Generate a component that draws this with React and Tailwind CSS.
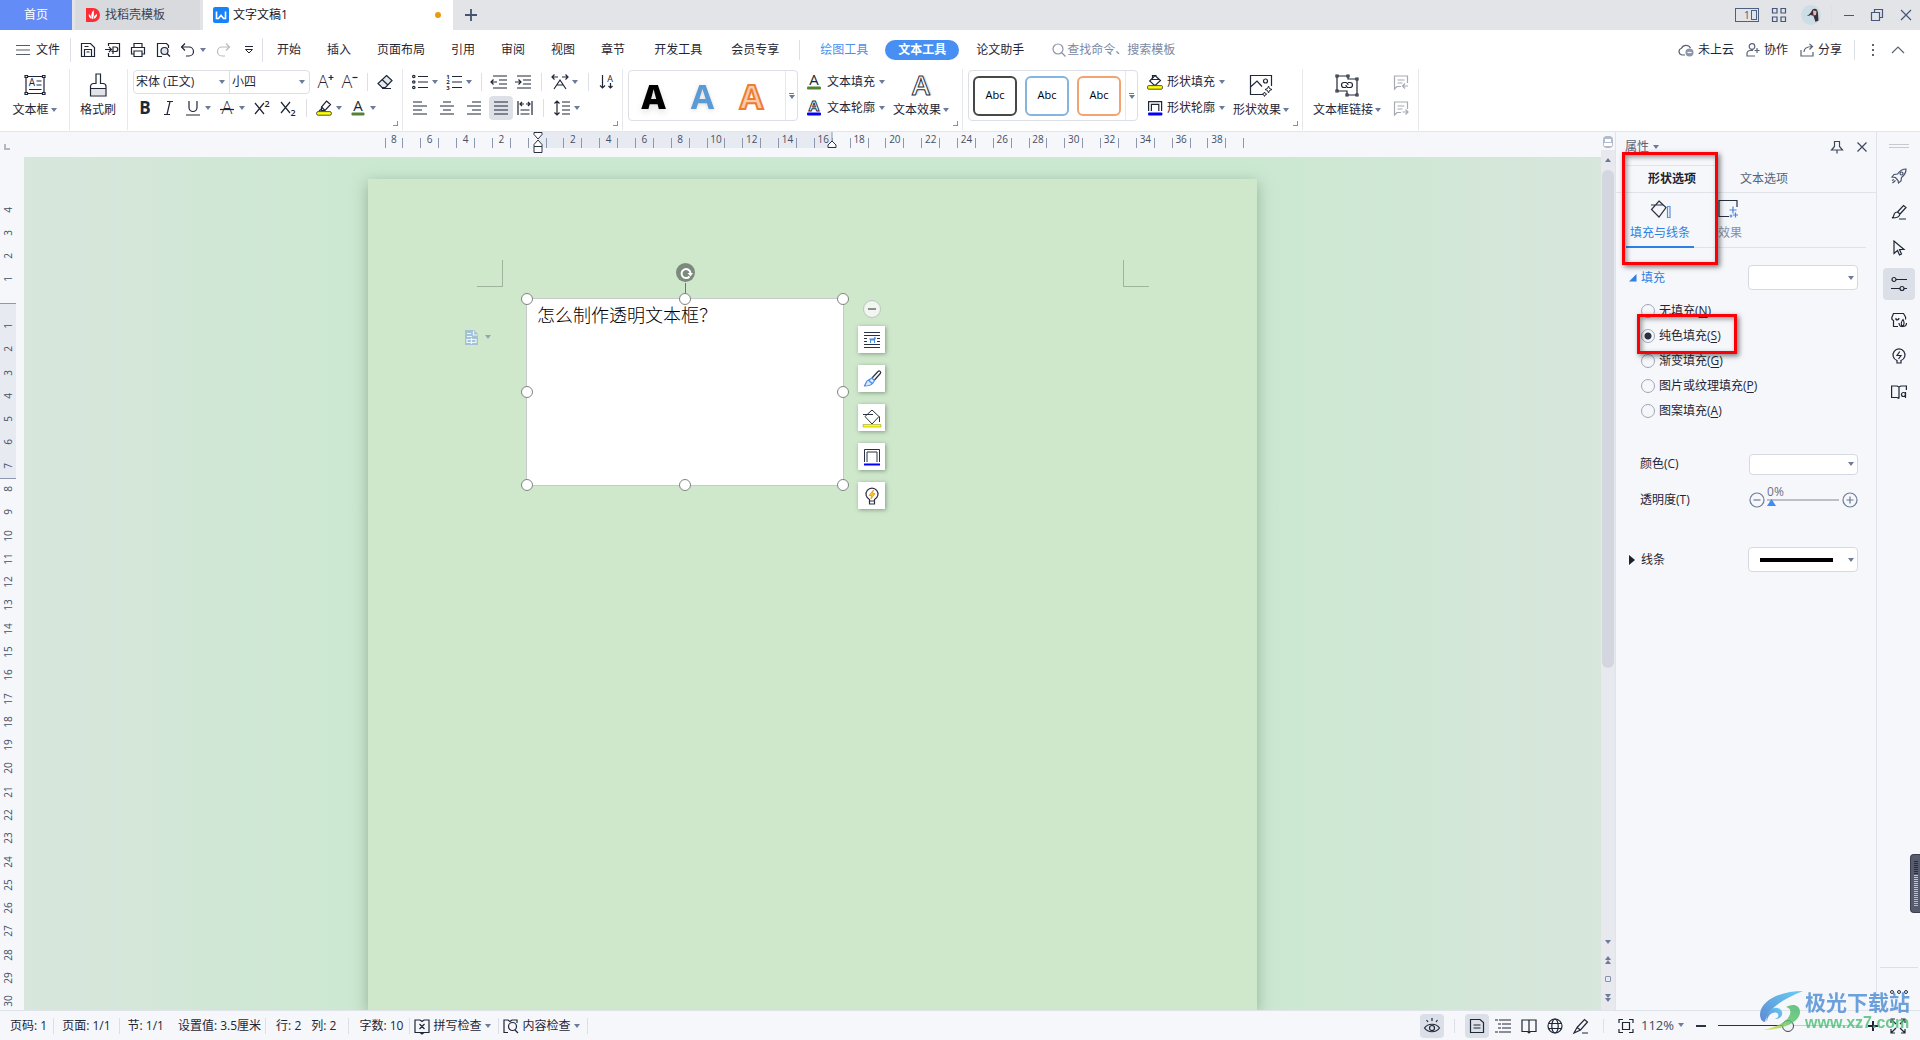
import { useState } from 'react';

const H_MARKS = Array.from({ length: 48 }, (_, i) => (i % 2 === 1 || i === 8 ? '' : String(Math.abs(i - 8))));

const V_MARKS = Array.from({ length: 35 }, (_, i) => (i === 4 ? '' : String(Math.abs(i - 4))));

const MENU = ['开始', '插入', '页面布局', '引用', '审阅', '视图', '章节'];
const FILLS = [
  ['无填充', 'N'],
  ['纯色填充', 'S'],
  ['渐变填充', 'G'],
  ['图片或纹理填充', 'P'],
  ['图案填充', 'A'],
];

function Svg({ size = 16, className = '', children }) {
  return (
    <svg
      width={size}
      height={size}
      viewBox={`0 0 ${size} ${size}`}
      fill="none"
      stroke="currentColor"
      strokeWidth={1.2}
      className={`shrink-0 overflow-visible ${className}`}
      aria-hidden="true"
    >
      {children}
    </svg>
  );
}

function Caret({ className = '' }) {
  return (
    <svg width="6" height="4" viewBox="0 0 6 4" className={`shrink-0 text-[#6d7b98] ${className}`} aria-hidden="true">
      <path d="M0 0h6L3 4z" fill="currentColor" />
    </svg>
  );
}

function Letter({ x = 8, y = 12, size = 15, children, ...rest }) {
  return (
    <text
      x={x}
      y={y}
      fontSize={size}
      textAnchor="middle"
      fill="currentColor"
      stroke="none"
      fontFamily="Open Sans, sans-serif"
      {...rest}
    >
      {children}
    </text>
  );
}

function Sep({ className = 'h-4' }) {
  return <span className={`w-px shrink-0 bg-[#dcdfe5] ${className}`} />;
}

function Tool({ label, className = 'w-6', children, caret }) {
  return (
    <button
      type="button"
      aria-label={label}
      className={`h-6 shrink-0 flex items-center justify-center gap-1 rounded-sm ${className}`}
    >
      {children}
      {caret && <Caret />}
    </button>
  );
}

function BigTool({ label, className = '', children, caret }) {
  return (
    <button type="button" className={`shrink-0 flex flex-col items-center gap-1 pt-1 ${className}`}>
      {children}
      <span className="flex items-center gap-0.5 leading-[18px]">
        {label}
        {caret && <Caret />}
      </span>
    </button>
  );
}

function LabelTool({ label, children }) {
  return (
    <button type="button" className="h-[26px] flex items-center gap-1 whitespace-nowrap">
      {children}
      {label}
      <Caret />
    </button>
  );
}

function Group({ className = '', launcher, children }) {
  return (
    <div className={`relative shrink-0 h-[61px] border-r border-[#e6e8ec] ${className}`}>
      {children}
      {launcher && (
        <span className="absolute right-1 bottom-1 w-[5px] h-[5px] border-r border-b border-[#8790a5]" />
      )}
    </div>
  );
}

function GalleryMore() {
  return (
    <button type="button" aria-label="更多样式" className="w-3 h-full flex flex-col items-center justify-center gap-px border-l border-[#e6e8ec]">
      <span className="w-[5px] h-px bg-[#6d7b98]" />
      <Caret />
    </button>
  );
}

function BucketIcon({ color }) {
  return (
    <Svg>
      <path d="M8 1.5l5.5 5-4.8 4.5H7L2.7 7z" />
      <path d="M4 5.5h9M5.5 4.5V1.5h4" />
      <rect x="0.6" y="11.6" width="14.8" height="3.6" rx="1" fill={color} strokeWidth="0.8" />
    </Svg>
  );
}

function OutlineIcon() {
  return (
    <Svg>
      <path d="M1.6 11V1.6h13V11M4.4 11V4.4h7.4V11" />
      <rect x="1" y="12.5" width="14.4" height="3" rx="1" fill="#0000ff" stroke="none" />
    </Svg>
  );
}

function TitleBar() {
  return (
    <header className="h-[30px] shrink-0 flex items-stretch bg-[#e2e4e8]">
      <button type="button" className="w-[72px] bg-[#648cf7] text-white">首页</button>
      <button type="button" className="ml-[3px] w-[125px] pl-[10px] flex items-center gap-1 bg-[#d9dadd] text-[#3c4254]">
        <Svg>
          <path d="M1 1h7a7 7 0 010 14H1z" fill="#fb2c36" stroke="none" />
          <path d="M7.5 12.5C5.5 9.5 6 6 8.5 3c.8 3.5.5 6.5-1 9.5zM6.5 12C4.5 11 3.5 9 3.8 7c1.7 1 2.7 2.7 2.7 5zM8.5 12c.3-2.5 1.5-4.2 3.5-5 .2 2.3-1 4.3-3.5 5z" fill="#fff" stroke="none" />
        </Svg>
        找稻壳模板
      </button>
      <button type="button" className="ml-[3px] w-[250px] pl-[10px] pr-3 flex items-center gap-1 bg-white text-[#14181f]">
        <Svg>
          <rect x="0" y="0" width="16" height="16" rx="2" fill="#1683fb" stroke="none" />
          <path d="M3.5 4.5v7h2L8 8.2l2.5 3.3h2v-7" stroke="#fff" strokeWidth="1.6" />
        </Svg>
        文字文稿1
        <span className="ml-auto w-[6px] h-[6px] rounded-full bg-[#e89c0c]" />
      </button>
      <button type="button" aria-label="新建标签" className="w-9 flex items-center justify-center text-[#45536f]">
        <Svg size={12}>
          <path d="M6 0v12M0 6h12" strokeWidth="1.8" />
        </Svg>
      </button>
      <div className="ml-auto pr-2 flex items-center text-[#45567a]">
        <button type="button" aria-label="窗口布局" className="relative w-6 h-[14px] border border-[#4d6080] text-[10px] leading-3 text-left pl-2">
          1
          <span className="absolute right-px top-px w-[6px] h-[10px] border border-[#4d6080]" />
        </button>
        <button type="button" aria-label="应用" className="ml-3">
          <Svg>
            <path d="M1.5 1.5h4.500v4.500H1.500zM10 1.500h4.500v4.500H10zM1.500 10h4.500v4.500H1.500zM10 10h4.500v4.500H10z" />
          </Svg>
        </button>
        <button type="button" aria-label="账号" className="ml-[14px]">
          <Svg size={20}>
            <circle cx="10" cy="10" r="10" fill="#cddde5" stroke="none" />
            <path d="M11.500 4.500c3-2 5.500 0 5.500 4l.5 7-3 1.500-2-6-2.500-1c-2.500 1-3.500 1-4 .5 2-.5 3.500-2 5.500-6z" fill="#3a2f3c" stroke="none" />
            <path d="M12 5.500l3.500.500-.500 4-2.500.5z" fill="#e8b9a8" stroke="none" />
          </Svg>
        </button>
        <Sep className="ml-[10px] h-5 bg-[#c4c7ce]" />
        <button type="button" aria-label="最小化" className="ml-3 w-[10px] h-px bg-[#45567a]" />
        <button type="button" aria-label="还原" className="ml-4">
          <Svg size={14}>
            <path d="M1.500 4.500h8v8h-8zM4.500 4V1.500h8v8H10" />
          </Svg>
        </button>
        <button type="button" aria-label="关闭" className="ml-4">
          <Svg size={12}>
            <path d="M1 1l10 10M11 1L1 11" />
          </Svg>
        </button>
      </div>
    </header>
  );
}

function MenuBar() {
  return (
    <div className="h-[39px] shrink-0 flex items-center whitespace-nowrap">
      <button type="button" className="pl-4 flex items-center gap-[6px]">
        <Svg size={14}>
          <path d="M0 2.500h14M0 7h14M0 11.500h14" stroke="#555c6b" />
        </Svg>
        文件
      </button>
      <Sep className="ml-[10px] h-6" />
      <div className="pl-[9px] flex items-center gap-[9px]">
        <button type="button" aria-label="保存">
          <Svg>
            <path d="M1.500 14.500v-13h9l4 4v9zM4.500 14.500v-7h7v7M6.500 10h3M4.500 4.500h4" />
          </Svg>
        </button>
        <button type="button" aria-label="输出">
          <Svg>
            <path d="M3.500 4V1.500h11v13h-11V11M0 7.500h6M4 5l2.500 2.500L4 10M8 12V5h2.500a2 2 0 010 4.500H6.500" />
          </Svg>
        </button>
        <button type="button" aria-label="打印">
          <Svg>
            <path d="M4 5V1.500h8V5M3.500 12h-2V5.500h13V12h-2M4 9h8v5.500H4z" />
          </Svg>
        </button>
        <button type="button" aria-label="打印预览">
          <Svg>
            <path d="M7 14.500H2.500v-13h9l2 2V6" />
            <circle cx="9.500" cy="9" r="3.500" fill="#dfe3ea" />
            <path d="M12 11.500l3 3" />
          </Svg>
        </button>
        <button type="button" aria-label="撤销" className="flex items-center gap-1">
          <Svg>
            <path d="M5 1.500L1.500 5 5 8.500M1.500 5H9a4.500 4.500 0 010 9H6" />
          </Svg>
          <Caret />
        </button>
        <button type="button" aria-label="恢复" className="text-[#b6bac2]">
          <Svg>
            <path d="M11 1.500L14.500 5 11 8.500M14.500 5H7a4.500 4.500 0 000 9h3" />
          </Svg>
        </button>
        <button type="button" aria-label="自定义快速访问" className="ml-1">
          <Svg size={10}>
            <path d="M1 1.500h8M1.500 4.500h7L5 8z" strokeWidth="1" />
          </Svg>
        </button>
      </div>
      <Sep className="ml-2 h-6" />
      <nav className="pl-[14px] flex items-center gap-[26px]">
        {MENU.map((m) => (
          <button key={m} type="button">{m}</button>
        ))}
      </nav>
      <nav className="pl-[29px] flex items-center gap-[29px]">
        <button type="button">开发工具</button>
        <button type="button">会员专享</button>
      </nav>
      <Sep className="ml-5 h-5" />
      <nav className="pl-5 flex items-center gap-[17px]">
        <button type="button" className="text-[#4a8ff2]">绘图工具</button>
        <button type="button" className="w-[74px] h-5 rounded-full bg-[#478ff3] text-white font-bold">文本工具</button>
        <button type="button">论文助手</button>
      </nav>
      <label className="pl-7 flex items-center gap-px text-[#8b95aa]">
        <Svg size={14}>
          <circle cx="6" cy="6" r="5" />
          <path d="M9.500 9.500l4 4" />
        </Svg>
        <input aria-label="查找" placeholder="查找命令、搜索模板" className="w-[120px] outline-none placeholder:text-[#7c88a1]" />
      </label>
      <div className="ml-auto pr-[15px] flex items-center gap-3">
        <button type="button" className="flex items-center gap-1">
          <Svg className="text-[#5b6375]">
            <path d="M7 13H4A3.500 3.500 0 013.500 6.200 5 5 0 0112.500 6" />
            <circle cx="11.500" cy="10.500" r="4" fill="#8c96ab" stroke="none" />
            <path d="M9.500 10.500h4" stroke="#fff" />
          </Svg>
          未上云
        </button>
        <button type="button" className="flex items-center gap-1">
          <Svg size={14} className="text-[#5b6375]">
            <circle cx="6" cy="3.500" r="2.800" />
            <path d="M9 13H1v-2.500a3 3 0 013-3h3M11 5v5M8.500 7.500h5" />
          </Svg>
          协作
        </button>
        <button type="button" className="flex items-center gap-1">
          <Svg size={14} className="text-[#5b6375]">
            <path d="M1 7v6h12V9M4 9c0-4 3-5.500 8.500-5.500M9.500 1l3 2.500-3 3" />
          </Svg>
          分享
        </button>
        <Sep className="h-5" />
        <button type="button" aria-label="更多" className="w-3 flex flex-col items-center gap-[3px]">
          <span className="w-[2px] h-[2px] bg-[#5b6375]" />
          <span className="w-[2px] h-[2px] bg-[#5b6375]" />
          <span className="w-[2px] h-[2px] bg-[#5b6375]" />
        </button>
        <button type="button" aria-label="收起功能区">
          <Svg size={14} className="text-[#5b6375]">
            <path d="M1 10l6-6 6 6" />
          </Svg>
        </button>
      </div>
    </div>
  );
}

function FontGroup() {
  return (
    <Group launcher className="w-[275px] pl-[5px]">
      <div className="h-[26px] flex items-center">
        <div className="flex h-6 rounded-sm border border-[#dcdfe5]">
          <div className="relative flex items-center border-r border-[#dcdfe5]">
            <select aria-label="字体" defaultValue="宋体 (正文)" className="w-[95px] pl-[2px] appearance-none outline-none">
              <option>宋体 (正文)</option>
            </select>
            <Caret className="absolute right-1" />
          </div>
          <div className="relative flex items-center">
            <select aria-label="字号" defaultValue="小四" className="w-[79px] pl-[2px] appearance-none outline-none">
              <option>小四</option>
            </select>
            <Caret className="absolute right-1" />
          </div>
        </div>
        <Tool label="增大字号" className="ml-1 w-6">
          <Svg>
            <Letter x={5} y={14} size={18} fontWeight="300">A</Letter>
            <path d="M10.500 3.500h5M13 1v5" />
          </Svg>
        </Tool>
        <Tool label="减小字号">
          <Svg>
            <Letter x={5} y={14} size={18} fontWeight="300">A</Letter>
            <path d="M10.500 3.500h5" />
          </Svg>
        </Tool>
        <Sep className="mx-[5px] h-[18px]" />
        <Tool label="清除格式">
          <Svg>
            <path d="M9.500 1.500l5.500 5-6.500 7H5l-4-4z" fill="#e6e9ee" />
            <path d="M5 5.500l6 5.500M5 14.500h9" />
          </Svg>
        </Tool>
      </div>
      <div className="h-[26px] flex items-center">
        <Tool label="加粗">
          <span className="text-[17px] font-bold">B</span>
        </Tool>
        <Tool label="倾斜">
          <Svg>
            <path d="M6 1.500h6M3 14.500h6M9 1.500l-3 13" />
          </Svg>
        </Tool>
        <Tool label="下划线" className="w-[34px]" caret>
          <Svg>
            <path d="M4 1v6.500a4 4 0 008 0V1M1 15h14" />
          </Svg>
        </Tool>
        <Tool label="删除线" className="w-[34px]" caret>
          <Svg>
            <Letter y={14} size={18} fontWeight="300">A</Letter>
            <path d="M1 9.500h14" />
          </Svg>
        </Tool>
        <Tool label="上标" className="w-[26px]">
          <Svg>
            <path d="M1 3l9 11M10 3L1 14" />
            <Letter x={13} y={7} size={9} fontWeight="600">2</Letter>
          </Svg>
        </Tool>
        <Tool label="下标" className="w-[26px]">
          <Svg>
            <path d="M1 2l9 11M10 2L1 13" />
            <Letter x={13} y={16} size={9} fontWeight="600">2</Letter>
          </Svg>
        </Tool>
        <Sep className="mx-[5px] h-[18px]" />
        <Tool label="突出显示" className="w-[34px]" caret>
          <Svg>
            <path d="M10.500 1l4 3.500-5.500 6H5.500V7zM5.500 7L9 10.500M3 11l2.500-2" />
            <rect x="0.600" y="11.600" width="14.800" height="3.600" rx="1.500" fill="#ffff00" strokeWidth="0.800" />
          </Svg>
        </Tool>
        <Tool label="字体颜色" className="w-[34px]" caret>
          <Svg>
            <Letter y={11} size={15}>A</Letter>
            <rect x="1.500" y="12.500" width="13" height="3" rx="1" fill="#548235" stroke="none" />
          </Svg>
        </Tool>
      </div>
    </Group>
  );
}

function ParagraphGroup() {
  return (
    <Group launcher className="w-[220px] pl-[5px]">
      <div className="h-[26px] flex items-center">
        <Tool label="项目符号" className="w-[34px]" caret>
          <Svg>
            <path d="M6 2.500h10M6 8h10M6 13.500h10" />
            <circle cx="1.800" cy="2.500" r="1.200" />
            <circle cx="1.800" cy="8" r="1.200" />
            <circle cx="1.800" cy="13.500" r="1.200" />
          </Svg>
        </Tool>
        <Tool label="编号" className="w-[34px]" caret>
          <Svg>
            <path d="M6 2.500h10M6 8h10M6 13.500h10" />
            <Letter x={2} y={5} size={6} fontWeight="700">1</Letter>
            <Letter x={2} y={10} size={6} fontWeight="700">2</Letter>
            <Letter x={2} y={16} size={6} fontWeight="700">3</Letter>
          </Svg>
        </Tool>
        <Sep className="mx-[5px] h-[18px]" />
        <Tool label="减少缩进">
          <Svg>
            <path d="M2 2h14M8 6h8M8 10h8M2 14h14M0 8h6M2.500 5.500L0 8l2.500 2.500" />
          </Svg>
        </Tool>
        <Tool label="增加缩进">
          <Svg>
            <path d="M2 2h14M8 6h8M8 10h8M2 14h14M0 8h6M3.500 5.500L6 8l-2.500 2.500" />
          </Svg>
        </Tool>
        <Sep className="mx-[6px] h-[18px]" />
        <Tool label="字符缩放" className="w-[34px]" caret>
          <Svg>
            <path d="M0 3h6M10 3h6M2.500.5L0 3l2.500 2.500M13.500.5L16 3l-2.500 2.500M2 15l6-9 6 9M5 11h6" />
          </Svg>
        </Tool>
        <Sep className="mx-[6px] h-[18px]" />
        <Tool label="排序">
          <Svg>
            <path d="M3.500 1v13M1 11.500L3.500 14 6 11.500M11.500 9v5M9.500 12l2 2 2-2" />
            <Letter x={11} y={8} size={9}>A</Letter>
          </Svg>
        </Tool>
      </div>
      <div className="h-[26px] flex items-center">
        <div className="flex gap-[3px]">
          <Tool label="左对齐">
            <Svg>
              <path d="M1 2h9M1 6h14M1 10h9M1 14h14" />
            </Svg>
          </Tool>
          <Tool label="居中">
            <Svg>
              <path d="M4 2h8M1 6h14M4 10h8M1 14h14" />
            </Svg>
          </Tool>
          <Tool label="右对齐">
            <Svg>
              <path d="M6 2h9M1 6h14M6 10h9M1 14h14" />
            </Svg>
          </Tool>
          <Tool label="两端对齐" className="w-6 bg-[#dde1e7]">
            <Svg>
              <path d="M1 2h14M1 6h14M1 10h14M1 14h14" />
            </Svg>
          </Tool>
        </div>
        <Tool label="分散对齐">
          <Svg>
            <path d="M1 1v14M15 1v14M3.500 10h9M3.500 14h9M3 4h4M9 4h4M5 2L3 4l2 2M11 2l2 2-2 2" />
          </Svg>
        </Tool>
        <Sep className="mx-[6px] h-[18px]" />
        <Tool label="行距" className="w-[34px]" caret>
          <Svg>
            <path d="M3 1v14M.5 3.500L3 1l2.500 2.500M.5 12.500L3 15l2.500-2.500M8 2h8M8 6h8M8 10h8M8 14h8" />
          </Svg>
        </Tool>
      </div>
    </Group>
  );
}

function Ribbon() {
  return (
    <div className="h-[62px] shrink-0 flex items-start whitespace-nowrap">
      <Group className="w-[70px]">
        <BigTool label="文本框" caret className="w-full">
          <Svg size={24}>
            <path d="M3 3.500h18v17H3z" />
            <path d="M13.500 8h5M13.500 12h5M6 16.500h12.500" />
            <Letter x={9} y={13} size={10}>A</Letter>
            <path d="M2 2.500h2.500v2H2zM19.500 2.500H22v2h-2.500zM2 19.500h2.500v2H2zM19.500 19.500H22v2h-2.500z" fill="#fff" />
          </Svg>
        </BigTool>
      </Group>
      <Group className="w-[58px]">
        <BigTool label="格式刷" className="w-[56px]">
          <Svg size={24}>
            <path d="M4.500 15.500h15v7h-15z" fill="#e2e4e8" stroke="none" />
            <path d="M10 1h4.500v9.500H17a3 3 0 013 3v9.500H4.500v-9.500a3 3 0 013-3H10zM4.500 15.500H20" />
          </Svg>
        </BigTool>
      </Group>
      <FontGroup />
      <ParagraphGroup />
      <Group launcher className="w-[340px] pl-[5px] flex">
        <div className="mt-px w-[170px] h-[51px] flex rounded-sm border border-[#dcdfe5]">
          <div className="flex-1 flex items-center text-[34px] font-bold">
            <button type="button" className="w-[49px] leading-none text-black font-extrabold drop-shadow-md">A</button>
            <button type="button" className="w-[49px] leading-none text-[#5b9bd5] drop-shadow-sm">A</button>
            <button type="button" className="w-[49px] leading-none text-[#f8cbad] [-webkit-text-stroke:2px_#ed7d31]">A</button>
          </div>
          <GalleryMore />
        </div>
        <div className="pl-[9px] flex flex-col">
          <LabelTool label="文本填充">
            <Svg>
              <Letter x={7} y={11} size={15}>A</Letter>
              <rect x="0" y="12.500" width="14" height="3" rx="1" fill="#548235" stroke="none" />
            </Svg>
          </LabelTool>
          <LabelTool label="文本轮廓">
            <Svg>
              <Letter x={7} y={11} size={15} fontWeight="700" fill="#fff" stroke="#2a3142" strokeWidth="1">A</Letter>
              <rect x="0" y="12.500" width="14" height="3" rx="1" fill="#0000ff" stroke="none" />
            </Svg>
          </LabelTool>
        </div>
        <BigTool label="文本效果" caret className="pl-2">
          <Svg size={24}>
            <Letter x={14} y={22} size={27} fontWeight="600" fill="#e2e4e8">A</Letter>
            <Letter x={12} y={22} size={27} fontWeight="600" fill="#fff" stroke="#2a3142" strokeWidth="1">A</Letter>
          </Svg>
        </BigTool>
      </Group>
      <Group launcher className="w-[340px] pl-[5px] flex">
        <div className="mt-px w-[170px] h-[51px] flex rounded-sm border border-[#dcdfe5]">
          <div className="flex-1 flex items-center justify-center gap-2 text-[11px] text-black">
            <button type="button" className="w-11 h-10 rounded-md border-2 border-[#45474b]">Abc</button>
            <button type="button" className="w-11 h-10 rounded-md border-2 border-[#84b4e0]">Abc</button>
            <button type="button" className="w-11 h-10 rounded-md border-2 border-[#f2a36f]">Abc</button>
          </div>
          <GalleryMore />
        </div>
        <div className="pl-[9px] flex flex-col">
          <LabelTool label="形状填充">
            <BucketIcon color="#ffff00" />
          </LabelTool>
          <LabelTool label="形状轮廓">
            <OutlineIcon />
          </LabelTool>
        </div>
        <BigTool label="形状效果" caret className="pl-2">
          <Svg size={24}>
            <path d="M14 21.500H1.500v-19h21V13M1.500 14L8 8l5 5.500" />
            <circle cx="16.500" cy="8" r="2" />
            <path d="M19.500 13l1 2.500 2.500 1-2.500 1-1 2.500-1-2.500-2.500-1 2.500-1zM15.500 19l.7 1.500 1.500.7-1.500.7-.7 1.500-.7-1.500-1.500-.7 1.500-.7z" strokeWidth="1" />
          </Svg>
        </BigTool>
      </Group>
      <Group className="w-[116px] flex">
        <BigTool label="文本框链接" caret className="w-[88px]">
          <Svg size={24}>
            <path d="M2 3h11v3h9v16H12v-4H2z" />
            <path d="M11 14.500H9a2.500 2.500 0 010-5h1.500a2.500 2.500 0 012.500 2.500M13 9.500h2a2.500 2.500 0 010 5h-1.500A2.500 2.500 0 0111 12" />
            <path d="M1 2h2v2H1zM12 2h2v2h-2zM21 5h2v2h-2zM1 17h2v2H1zM21 21h2v2h-2zM11 21h2v2h-2z" fill="#fff" />
          </Svg>
        </BigTool>
        <div className="-ml-[2px] flex flex-col text-[#a5a9b2]">
          <Tool label="上一个文本框" className="w-6 my-px">
            <Svg>
              <path d="M8 12.500H4L1.500 15V2h13v7M4.500 6h7M4.500 9h5M15 12H9.500M12 9.500L9.500 12l2.500 2.500" />
            </Svg>
          </Tool>
          <Tool label="下一个文本框" className="w-6 my-px">
            <Svg>
              <path d="M8 12.500H4L1.500 15V2h13v7M4.500 6h7M4.500 9h5M9.500 12H15M12.500 9.500L15 12l-2.500 2.500" />
            </Svg>
          </Tool>
        </div>
      </Group>
    </div>
  );
}

function HorizontalRuler() {
  return (
    <div className="h-[25px] shrink-0 flex bg-[#f5f7fa]">
      <div className="w-6 shrink-0 pl-1 pt-3">
        <span className="block w-[6px] h-[6px] border-l-2 border-b-2 border-[#b4b8c2]" />
      </div>
      <div className="flex-1 pl-1">
        <div className="relative mx-auto w-[860px] h-4 flex text-[10px] text-[#454f66]">
          <span className="absolute left-[153px] top-0 w-[294px] h-4 bg-[#e7eaf1]" />
          {H_MARKS.map((m, i) => (
            <span key={i} className="relative flex-1 flex">
              <span className="w-px h-[10px] self-end bg-[#8c98af]" />
              <span className="flex-1 w-0 flex justify-center leading-[14px]">{m}</span>
            </span>
          ))}
          <span className="w-px h-[10px] self-end bg-[#8c98af]" />
          <svg width="10" height="22" viewBox="0 0 10 22" className="absolute left-[148px] top-0" fill="#fff" stroke="#2a3142" aria-hidden="true">
            <path d="M1 .5h8v2L5 7 1 2.500zM5 8l4 4.500v2H1v-2zM1 14.500h8v6H1z" />
          </svg>
          <svg width="10" height="16" viewBox="0 0 10 16" className="absolute left-[442px] top-0" fill="#fff" stroke="#2a3142" aria-hidden="true">
            <path d="M5 0v9" stroke="#8c98af" />
            <path d="M5 9l4 4v2.500H1V13z" />
          </svg>
        </div>
      </div>
    </div>
  );
}

function VerticalRuler() {
  return (
    <div className="relative w-6 shrink-0 pt-[41px] overflow-hidden bg-[#f5f7fa]">
      <span className="absolute left-0 top-[146px] w-4 h-[176px] border-y border-[#8c98af] bg-[#e7eaf1]" />
      <div className="relative w-4 h-[815px] flex flex-col text-[10px] text-[#454f66]">
        {V_MARKS.map((m, i) => (
          <span key={i} className="flex-1 h-0 flex items-center justify-center">
            <span className="-rotate-90 leading-4">{m}</span>
          </span>
        ))}
      </div>
    </div>
  );
}

function Handle({ className }) {
  return <span className={`absolute w-3 h-3 -m-[6px] rounded-full border border-[#7e857f] bg-white ${className}`} />;
}

function TextBox() {
  return (
    <div className="absolute left-[158px] top-[119px] w-[318px] h-[188px] border border-[#c6cacb] bg-white">
      <p className="pl-[10px] pt-1 text-[18px] leading-6 font-light text-black">怎么制作透明文本框？</p>
      <span className="absolute left-1/2 -top-4 w-px h-4 bg-[#6d746e]" />
      <span className="absolute left-1/2 -top-9 -ml-[9px] w-[19px] h-[19px] rounded-full bg-[#7b8a7a] text-white flex items-center justify-center">
        <Svg size={14}>
          <path d="M10.500 10.500A4.500 4.500 0 1111.500 7" strokeWidth="2" />
          <path d="M8.500 7H14l-2.500 3.500z" fill="currentColor" stroke="none" />
        </Svg>
      </span>
      <Handle className="left-0 top-0" />
      <Handle className="left-1/2 top-0" />
      <Handle className="left-full top-0" />
      <Handle className="left-0 top-1/2" />
      <Handle className="left-full top-1/2" />
      <Handle className="left-0 top-full" />
      <Handle className="left-1/2 top-full" />
      <Handle className="left-full top-full" />
    </div>
  );
}

function QuickButton({ label, children }) {
  return (
    <button type="button" aria-label={label} className="w-[27px] h-[27px] flex items-center justify-center bg-white shadow-[1px_1px_4px_rgba(60,80,60,0.5)]">
      {children}
    </button>
  );
}

function QuickTools() {
  return (
    <div className="absolute left-[490px] top-[121px] flex flex-col items-center gap-3 text-[#2a3142]">
      <button type="button" aria-label="收起" className="-mb-1 w-[18px] h-[18px] flex items-center justify-center rounded-full border border-[#bcc6bb] bg-[#f1f6f0]">
        <span className="w-2 h-[2px] bg-[#8a938a]" />
      </button>
      <QuickButton label="布局选项">
        <Svg size={18}>
          <path d="M1 1.500h16M1 4.500h16M1 7.500h3M1 10.500h3M14 7.500h3M14 10.500h3M1 13.500h16M1 16.500h16" />
          <path d="M6 7.500h4.500L12 5.500l1 2-1 1V12h-1V9.500H8V12H7V9z" fill="#4a8ae8" stroke="none" />
        </Svg>
      </QuickButton>
      <QuickButton label="样式">
        <Svg size={18}>
          <path d="M9 8l6-6.500a1.500 1.500 0 012.300 2L11.500 10" />
          <path d="M1 16c2-1 1.500-5 4.500-6 1-.5 2.500-1.500 3.500-2l2.500 2.500c-.5 1-1 2-2 3-2 2.500-5.500 2.500-8.500 2.500zM5.500 10l3.500 3.500" stroke="#4a8ae8" fill="#dce9fb" />
        </Svg>
      </QuickButton>
      <QuickButton label="填充">
        <Svg size={18}>
          <path d="M9 1l7 6.500L9 15 2 7.500zM0 5.500h10M16.500 7.500V13" strokeWidth="1" />
          <path d="M0 15.500h18V18H0z" fill="#ffff00" stroke="#8a8a3a" strokeWidth="0.500" />
        </Svg>
      </QuickButton>
      <QuickButton label="轮廓">
        <Svg size={18}>
          <path d="M1.500 14V1.500h15V14M4 14V4h10v10" strokeWidth="1" />
          <path d="M1 16.500h16" stroke="#0000ff" strokeWidth="2" />
        </Svg>
      </QuickButton>
      <QuickButton label="更多建议">
        <Svg size={18}>
          <path d="M6.500 14v-1.500a6 6 0 115 0V14zM6.500 14h5v3h-5z" />
          <path d="M10.500 3L6 8.500h2.500L8 12l4-5.500H9.500z" fill="#fbc531" stroke="#e89c0c" strokeWidth="0.800" />
        </Svg>
      </QuickButton>
    </div>
  );
}

function Canvas() {
  return (
    <main className="flex-1 min-w-0 flex justify-center overflow-hidden pt-[22px] bg-[linear-gradient(to_right,#d8e6dc,#cbe8d1_22%,#cbe8d1_78%,#d8e6dc)]">
      <div className="relative w-[889px] shrink-0 bg-[#cfe8cc] shadow-[0_4px_14px_rgba(90,120,95,0.5)]">
        <span className="absolute left-[109px] top-[81px] w-[26px] h-[27px] border-r border-b border-[#9fb39d]" />
        <span className="absolute right-[108px] top-[81px] w-[26px] h-[27px] border-l border-b border-[#9fb39d]" />
        <button type="button" aria-label="段落布局" className="absolute left-[97px] top-[150px] flex items-center gap-1">
          <Svg className="text-[#eef6fb]">
            <path d="M0 1h9l4 4v11H0z" fill="#a3c2d6" stroke="none" />
            <path d="M2 4.500h4M2 7.500h5M2 10.500h9v3H2zM8.500 2v4h4M6.500 9v6" />
          </Svg>
          <Caret className="opacity-60" />
        </button>
        <TextBox />
        <QuickTools />
      </div>
    </main>
  );
}

function ScrollBar() {
  return (
    <div className="w-[14px] shrink-0 flex flex-col items-center bg-[#f5f7fa] text-[#8792ae]">
      <span className="mt-1 mb-[2px] w-[10px] h-3 rounded-sm bg-[#b3bacb] flex flex-col items-center justify-center gap-px">
        <span className="w-[6px] h-[3px] bg-white" />
        <span className="w-[8px] h-[3px] bg-white" />
      </span>
      <div className="flex-1 w-full flex flex-col items-center bg-[#e8e9ef]">
        <Caret className="my-2 rotate-180" />
        <span className="w-3 h-[498px] rounded-full bg-[#d3d6df]" />
        <div className="mt-auto pb-2 flex flex-col items-center gap-3">
          <Caret />
          <span className="flex flex-col">
            <Caret className="rotate-180" />
            <Caret className="rotate-180" />
          </span>
          <span className="w-[6px] h-[6px] rounded-[1px] border border-[#8792ae]" />
          <span className="flex flex-col">
            <Caret />
            <Caret />
          </span>
        </div>
      </div>
    </div>
  );
}

function PropertyPanel() {
  const [fill, setFill] = useState('S');
  const [opacity, setOpacity] = useState(0);

  return (
    <aside className="relative w-[262px] shrink-0 border-x border-[#e1e3ea] bg-[#f5f7fa]">
      <div className="h-[33px] pl-[9px] pr-2 pb-1 flex items-center text-[#5a6275]">
        属性
        <Caret className="ml-1" />
        <button type="button" aria-label="固定" className="ml-auto text-[#3c465c]">
          <Svg size={14}>
            <path d="M4.500 1.500h5v5l3 3.500h-11l3-3.500zM7 10v3.500" />
          </Svg>
        </button>
        <button type="button" aria-label="关闭面板" className="ml-3 text-[#3c465c]">
          <Svg size={12}>
            <path d="M1.500 1.500l9 9M10.500 1.500l-9 9" />
          </Svg>
        </button>
      </div>
      <div className="h-7 flex items-stretch border-b border-[#e1e3ea]">
        <button type="button" className="w-[92px] ml-[10px] border-t border-[#e1e3ea] font-bold text-[#1c2230]">形状选项</button>
        <button type="button" className="w-[92px] text-[#5a6275]">文本选项</button>
      </div>
      <div className="ml-[10px] mr-[10px] h-[55px] flex items-stretch border-b border-[#e1e3ea]">
        <button type="button" className="-mb-px w-[68px] pt-[6px] flex flex-col items-center gap-1 border-b-2 border-[#2f7fe6] text-[#2f7fe6]">
          <Svg size={20} className="text-[#2a3142]">
            <path d="M9 2l7 6.500L9 18 1.500 10.500zM1 6h12" />
            <path d="M17.500 7.500H20v11h-2.500z" stroke="#5b8fe0" />
          </Svg>
          <span className="leading-5">填充与线条</span>
        </button>
        <button type="button" className="w-[68px] pt-[6px] pl-6 flex flex-col items-start gap-1 text-[#8790a5]">
          <Svg size={20} className="text-[#2a3142]">
            <path d="M11 17.500H1v-16h18V8" />
            <path d="M15 7.500v7M11.500 11h7M13 15.500v3M11.500 17h3M17.500 13.500v5M15 16h5" stroke="#4a84dc" />
          </Svg>
          <span className="leading-5">效果</span>
        </button>
      </div>

      <div className="pl-[13px] pr-[18px]">
        <div className="mt-[17px] flex items-center">
          <button type="button" className="flex items-center gap-1 text-[#2f7fe6]">
            <Svg size={8}>
              <path d="M7.500 0v7.500H0z" fill="currentColor" stroke="none" />
            </Svg>
            填充
          </button>
          <div className="relative ml-auto flex items-center">
            <select aria-label="填充样式" className="w-[110px] h-[25px] rounded-sm border border-[#d5d9e1] bg-white appearance-none" />
            <Caret className="absolute right-1" />
          </div>
        </div>

        <fieldset className="mt-2 pl-3 flex flex-col">
          {FILLS.map(([name, key]) => (
            <label key={key} className="h-[25px] flex items-center gap-1">
              <input
                type="radio"
                name="fill"
                checked={fill === key}
                onChange={() => setFill(key)}
                className="w-[14px] h-[14px] appearance-none rounded-full border border-[#a0a6b4] bg-[#f5f7fa] checked:bg-[radial-gradient(circle,#2a3142_0_3px,transparent_4px)]"
              />
              <span>
                {name}(<u className="underline-offset-2">{key}</u>)
              </span>
            </label>
          ))}
        </fieldset>

        <label className="mt-[30px] pl-[11px] h-[22px] flex items-center justify-between">
          颜色(C)
          <span className="relative flex items-center">
            <select aria-label="颜色" className="w-[109px] h-[21px] rounded-sm border border-[#d5d9e1] bg-white appearance-none" />
            <Caret className="absolute right-1" />
          </span>
        </label>

        <div className="mt-[14px] pl-[11px] h-[22px] flex items-center">
          <label htmlFor="opacity">透明度(T)</label>
          <button type="button" aria-label="降低透明度" className="ml-auto text-[#6d7b98]" onClick={() => setOpacity(Math.max(0, opacity - 1))}>
            <Svg>
              <circle cx="8" cy="8" r="7" />
              <path d="M4.500 8h7" />
            </Svg>
          </button>
          <span className="relative ml-[2px] w-[72px] flex items-center">
            <span className="absolute left-0 bottom-px leading-4 text-[#6b7183]">{opacity}%</span>
            <input
              id="opacity"
              type="range"
              min="0"
              max="100"
              value={opacity}
              onChange={(e) => setOpacity(Number(e.target.value))}
              className="w-full h-[2px] appearance-none bg-[#bcbfc6] [&::-webkit-slider-thumb]:appearance-none [&::-webkit-slider-thumb]:w-[9px] [&::-webkit-slider-thumb]:h-[7px] [&::-webkit-slider-thumb]:mt-[5px] [&::-webkit-slider-thumb]:bg-[#3f8cf4] [&::-webkit-slider-thumb]:[clip-path:polygon(50%_0,100%_100%,0_100%)]"
            />
          </span>
          <button type="button" aria-label="提高透明度" className="ml-[3px] text-[#6d7b98]" onClick={() => setOpacity(Math.min(100, opacity + 1))}>
            <Svg>
              <circle cx="8" cy="8" r="7" />
              <path d="M4.500 8h7M8 4.500v7" />
            </Svg>
          </button>
        </div>

        <div className="mt-9 flex items-center">
          <button type="button" className="flex items-center gap-[6px]">
            <svg width="6" height="10" viewBox="0 0 6 10" aria-hidden="true">
              <path d="M0 0l6 5-6 5z" fill="#1c2230" />
            </svg>
            线条
          </button>
          <div className="relative ml-auto flex items-center">
            <select aria-label="线条样式" className="w-[110px] h-[25px] rounded-sm border border-[#d5d9e1] bg-white appearance-none" />
            <span className="absolute left-3 w-[73px] h-1 bg-black pointer-events-none" />
            <Caret className="absolute right-1" />
          </div>
        </div>
      </div>

      {/* callouts */}
      <span className="absolute left-[6px] top-5 w-[96px] h-[113px] border-3 border-[#fb0007] pointer-events-none shadow-[2px_2px_5px_rgba(0,0,0,0.5),inset_2px_2px_5px_rgba(0,0,0,0.4)]" />
      <span className="absolute left-[21px] top-[182px] w-[100px] h-[40px] border-3 border-[#fb0007] pointer-events-none shadow-[2px_2px_5px_rgba(0,0,0,0.5),inset_2px_2px_5px_rgba(0,0,0,0.4)]" />
    </aside>
  );
}

function SideButton({ label, active, children }) {
  return (
    <button
      type="button"
      aria-label={label}
      className={`w-8 h-8 flex items-center justify-center rounded-sm ${active ? 'bg-[#dbdfe7]' : ''}`}
    >
      {children}
    </button>
  );
}

function SideBar() {
  return (
    <aside className="w-[43px] shrink-0 pt-3 flex flex-col items-center bg-[#f5f7fa]">
      <span className="w-5 h-[4px] border-y border-[#c5c9d2]" />
      <div className="mt-3 flex flex-col gap-1">
        <SideButton label="快捷">
          <Svg className="text-[#46526e]">
            <path d="M15 1c-4 0-6 1.500-8.500 5L3 6.500 1 9l3.500.5 2.500 3L7.500 15 10 13l.5-3.500C14 7 15 5 15 1zM1 12.500l2-1M1.500 15l3-2.500" />
            <circle cx="10.500" cy="5.500" r="1.500" />
          </Svg>
        </SideButton>
        <SideButton label="样式和格式">
          <Svg>
            <path d="M6.500 8l6-6.500 2.500 2-6 6.500M6.500 8L9 10c-.5 3-4 4-8 4 2-1 1.500-3 2.500-4.500C4 8.500 5.500 8 6.500 8zM8 15h7" />
          </Svg>
        </SideButton>
        <SideButton label="选择">
          <Svg>
            <path d="M3 1v12.500l3.500-3 2 4.500 2-1-2-4.500H13z" />
          </Svg>
        </SideButton>
        <SideButton label="属性" active>
          <Svg>
            <path d="M5 3.500h11M0 12.500h9M13 12.500h3" />
            <circle cx="3" cy="3.500" r="2" />
            <circle cx="11" cy="12.500" r="2" />
          </Svg>
        </SideButton>
        <SideButton label="稻壳资源">
          <Svg>
            <path d="M7 14.500H2.500V8.500C1 8 .5 6.500 1 5l1.500-3.500h10L14.500 5c.3 1 .2 1.500 0 2.500M5 6v2M5 8c1.500 0 3-.5 3-2" />
            <path d="M11.500 14.500c-2-2-1.500-4.500.5-7 1.500 2.500 1.500 5-.5 7zM11 14.500c-1.500 0-3-1.500-3-3.500M12 14.500c2 0 3.500-1.500 3.500-3.500" />
          </Svg>
        </SideButton>
        <SideButton label="智能推荐">
          <Svg>
            <path d="M6 12.500a6 6 0 114 0v2.500H6zM8.800 3.500L6 7.500h4L7.500 11" />
          </Svg>
        </SideButton>
        <SideButton label="文档查找">
          <Svg>
            <path d="M8 3v11.500M8 3L6 2H.6v11.500H6l2 1M8 3l2-1h5.400v4" />
            <circle cx="12.500" cy="10.500" r="2" />
            <path d="M14.500 8v6" />
          </Svg>
        </SideButton>
      </div>
      <span className="mt-auto w-[38px] h-px bg-[#dcdfe5]" />
      <button type="button" aria-label="更多工具" className="mt-[22px] mb-4 flex gap-[3px]">
        <span className="w-1 h-1 rounded-full border border-[#2a3142]" />
        <span className="w-1 h-1 rounded-full border border-[#2a3142]" />
        <span className="w-1 h-1 rounded-full border border-[#2a3142]" />
      </button>
    </aside>
  );
}

function StatusBar() {
  return (
    <footer className="h-[30px] shrink-0 flex items-center border-t border-[#e1e3ea] bg-[#f5f7fa] whitespace-nowrap">
      <span className="pl-[10px] pr-[6px]">页码: 1</span>
      <Sep />
      <span className="px-2">页面: 1/1</span>
      <Sep />
      <span className="px-2">节: 1/1</span>
      <span className="pl-[6px] pr-1">设置值: 3.5厘米</span>
      <Sep />
      <span className="px-[10px]">行: 2</span>
      <span className="pr-3">列: 2</span>
      <Sep />
      <span className="pl-[10px] pr-[6px]">字数: 10</span>
      <Sep />
      <button type="button" className="px-1 flex items-center gap-[3px]">
        <Svg>
          <path d="M6 2H1v12.500h14V2h-5M6 2l2 1.500L10 2M6 14.500L8 16l2-1.500M5.500 6l5 5M10.500 6l-5 5" />
        </Svg>
        拼写检查
        <Caret className="ml-px" />
      </button>
      <Sep className="ml-[3px] h-4" />
      <button type="button" className="px-1 flex items-center gap-[3px]">
        <Svg>
          <path d="M5 14.500H1V2h4l2 1.500L9 2h5v3" />
          <circle cx="9.500" cy="8.500" r="4" />
          <path d="M12 12l3 3" />
        </Svg>
        内容检查
        <Caret className="ml-px" />
      </button>
      <Sep className="ml-[3px] h-4" />

      <div className="ml-auto pr-[14px] flex items-center">
        <button type="button" aria-label="护眼模式" className="w-6 h-6 flex items-center justify-center rounded-sm bg-[#dbdfe7]">
          <Svg>
            <path d="M.5 10C4 5 12 5 15.500 10 12 15 4 15 .5 10zM8 0v3M2.500 2l1.500 2M13.500 2L12 4" />
            <circle cx="8" cy="10" r="2.500" />
          </Svg>
        </button>
        <Sep className="mx-[10px] h-[14px]" />
        <button type="button" aria-label="页面视图" className="w-6 h-6 flex items-center justify-center rounded-sm bg-[#dbdfe7]">
          <Svg>
            <path d="M1.500 1.500h9.500l3.500 3v10h-13zM4.500 7h7M4.500 10h7" />
          </Svg>
        </button>
        <div className="ml-[6px] flex items-center gap-[10px]">
          <Svg>
            <path d="M0 2h3M4 2h12M3 6h3M7 6h9M3 10h3M7 10h9M0 14h3M4 14h12" />
          </Svg>
          <Svg>
            <path d="M8 2v13M1 2h14v11.500H9.500L8 15l-1.500-1.500H1z" />
          </Svg>
          <Svg>
            <circle cx="8" cy="8" r="7" />
            <ellipse cx="8" cy="8" rx="3.200" ry="7" />
            <path d="M1.500 5.500h13M1.500 10.500h13" />
          </Svg>
          <Svg>
            <path d="M4 9.500L11.500 1.500l3 2.500-7 8L1 15zM4 9.500L7.500 12M9 15h6" />
          </Svg>
        </div>
        <Sep className="mx-[14px] h-[14px]" />
        <button type="button" aria-label="适合页面">
          <Svg>
            <path d="M1 5V1.500h4M11 1.500h4V5M15 11v3.500h-4M5 14.500H1V11M4.500 4.500h7v7h-7z" />
          </Svg>
        </button>
        <button type="button" className="ml-[7px] flex items-center gap-1 text-[13px] text-[#3e4a66]">
          112%
          <Caret />
        </button>
        <button type="button" aria-label="缩小" className="ml-3 w-[10px] h-[2px] bg-[#2a3142]" />
        <input
          type="range"
          aria-label="显示比例"
          defaultValue="48"
          className="ml-3 w-[145px] h-px appearance-none bg-[linear-gradient(to_right,#2a3142_48%,#c5c9d2_48%)] [&::-webkit-slider-thumb]:appearance-none [&::-webkit-slider-thumb]:w-3 [&::-webkit-slider-thumb]:h-3 [&::-webkit-slider-thumb]:rounded-full [&::-webkit-slider-thumb]:border [&::-webkit-slider-thumb]:border-[#45474b] [&::-webkit-slider-thumb]:bg-[#f0f2f5]"
        />
        <button type="button" aria-label="放大" className="ml-[5px]">
          <Svg size={10}>
            <path d="M5 0v10M0 5h10" strokeWidth="2" />
          </Svg>
        </button>
        <button type="button" aria-label="全屏" className="ml-3">
          <Svg>
            <path d="M1 5V1h4M11 1h4v4M15 11v4h-4M5 15H1v-4M1 1l5 5M15 1l-5 5M15 15l-5-5M1 15l5-5" />
          </Svg>
        </button>
      </div>
    </footer>
  );
}

function Watermark() {
  return (
    <div className="absolute right-[10px] bottom-2 flex items-center pointer-events-none opacity-80">
      <svg width="46" height="42" viewBox="0 0 46 42" aria-hidden="true">
        <defs>
          <linearGradient id="swirl" x1="0" y1="1" x2="1" y2="0">
            <stop offset="0" stopColor="#3a6fc8" />
            <stop offset="1" stopColor="#45c4f5" />
          </linearGradient>
          <linearGradient id="leaf" x1="0" y1="1" x2="1" y2="0">
            <stop offset="0" stopColor="#f3e33c" />
            <stop offset="0.500" stopColor="#5cc46a" />
            <stop offset="1" stopColor="#3fb56b" />
          </linearGradient>
        </defs>
        <path d="M44 1C22 1 2 10 1 24c0 5 2 8 5 8C8 19 24 9 44 1z" fill="url(#swirl)" />
        <path d="M8 32C5 22 14 15 21 19c5 4 1 11-6 10 4 0 6-4 3-6-5-2-10 3-10 9z" fill="url(#swirl)" />
        <path d="M27 17c7-4 14-2 14 5 0 10-17 18-37 18 13-3 25-8 27-16 1-4 0-6-4-7z" fill="url(#leaf)" />
      </svg>
      <div className="flex flex-col">
        <span className="text-[21px] leading-6 font-bold text-[#4a8bd4]">极光下载站</span>
        <span className="font-['Liberation_Sans'] text-[16px] leading-[18px] font-bold text-[#4bbd74]">www.xz7.com</span>
      </div>
    </div>
  );
}

function Meter() {
  return (
    <div className="absolute right-0 top-[854px] w-[10px] h-[59px] flex justify-center items-center rounded-l-sm border border-r-0 border-[#3b3f4d] bg-[#565c6d]">
      <span className="w-1 h-[46px] bg-[repeating-linear-gradient(to_bottom,transparent_0_1px,#565c6d_1px_2px),linear-gradient(to_bottom,#2b2e38_30%,#f5c74a_30%,#b7df6a_60%,#5fe0cf)]" />
    </div>
  );
}

export default function App() {
  return (
    <div className="relative h-screen flex flex-col overflow-hidden bg-white text-xs text-[#1f2636] font-['Open_Sans','Noto_Sans_CJK_SC',sans-serif]">
      <TitleBar />
      <MenuBar />
      <Ribbon />
      <div className="flex-1 min-h-0 flex border-t border-[#e3e5e9]">
        <div className="flex-1 min-w-0 flex flex-col">
          <HorizontalRuler />
          <div className="flex-1 min-h-0 flex">
            <VerticalRuler />
            <Canvas />
          </div>
        </div>
        <ScrollBar />
        <PropertyPanel />
        <SideBar />
      </div>
      <StatusBar />
      <Meter />
      <Watermark />
    </div>
  );
}
